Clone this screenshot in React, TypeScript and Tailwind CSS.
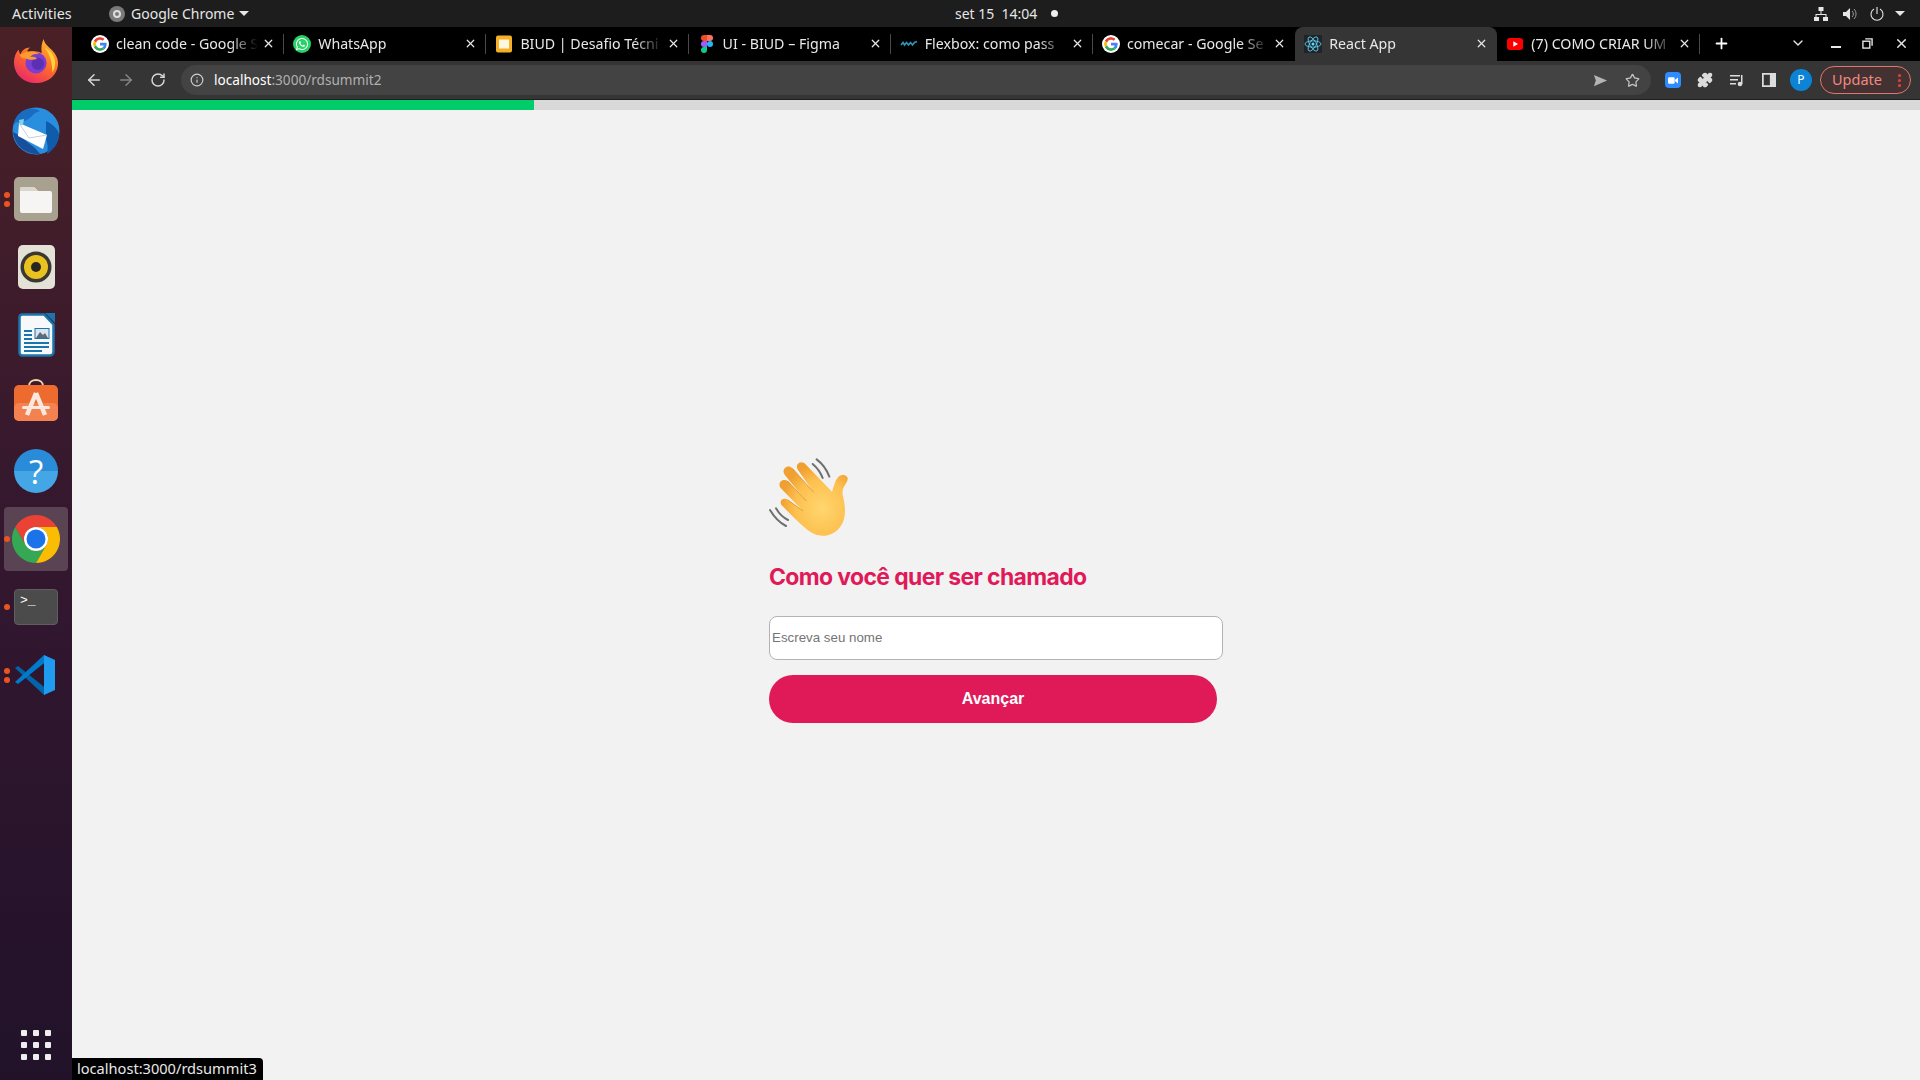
import React from 'react';
import { X, Plus, ChevronDown, ArrowLeft, ArrowRight, RotateCw, Info, Star, Puzzle } from 'lucide-react';
import { FaWhatsapp } from 'react-icons/fa';

const uiFont = 'font-["Noto_Sans",sans-serif]';

const GoogleIcon = () => (
  <svg viewBox="0 0 48 48" className="w-[18px] h-[18px] rounded-full bg-white p-[2px]">
    <path fill="#EA4335" d="M24 9.5c3.5 0 6.7 1.2 9.2 3.600l6.900-6.900C35.900 2.400 30.400 0 24 0 14.600 0 6.500 5.400 2.600 13.200l8 6.200C12.500 13.600 17.800 9.500 24 9.500z" />
    <path fill="#4285F4" d="M46.900 24.500c0-1.600-.1-3.100-.4-4.500H24v9h12.900c-.6 3-2.200 5.500-4.700 7.200l7.700 6c4.500-4.200 7-10.300 7-17.700z" />
    <path fill="#FBBC05" d="M10.600 28.600c-.5-1.400-.8-3-.8-4.600s.3-3.200.8-4.600l-8-6.200C.9 16.500 0 20.100 0 24s.9 7.500 2.600 10.800l8-6.200z" />
    <path fill="#34A853" d="M24 48c6.500 0 11.900-2.100 15.900-5.800l-7.700-6c-2.200 1.500-4.900 2.300-8.200 2.300-6.200 0-11.500-4.100-13.400-9.900l-8 6.200C6.500 42.600 14.600 48 24 48z" />
  </svg>
);

const WhatsAppIcon = () => (
  <span className="flex items-center justify-center w-[18px] h-[18px] rounded-full bg-[#25d366] text-white">
    <FaWhatsapp size={14} />
  </span>
);

const SlidesIcon = () => (
  <svg viewBox="0 0 18 18" className="w-[18px] h-[18px]">
    <rect x="1" y="0.500" width="16" height="17" rx="2" fill="#f6b026" />
    <rect x="4" y="4.500" width="10" height="9" fill="#fff6df" />
  </svg>
);

const FigmaIcon = () => (
  <svg viewBox="0 0 12 18" className="w-[12px] h-[18px]">
    <path fill="#f24e1e" d="M3 0h3v6H3a3 3 0 0 1 0-6z" />
    <path fill="#ff7262" d="M6 0h3a3 3 0 0 1 0 6H6z" />
    <path fill="#a259ff" d="M3 6h3v6H3a3 3 0 0 1 0-6z" />
    <circle cx="9" cy="9" r="3" fill="#1abcfe" />
    <path fill="#0acf83" d="M3 12h3v3a3 3 0 1 1-3-3z" />
  </svg>
);

const DpwIcon = () => (
  <svg viewBox="0 0 18 18" className="w-[18px] h-[18px]">
    <path d="M1 10l2-2.500 1.500 2.500 2-2.500 2 2.500 2-2.500 2 2.500 2-2.500 2.500-1" fill="none" stroke="#2a97b5" strokeWidth="1.600" />
  </svg>
);

const ReactIcon = () => (
  <svg viewBox="0 0 18 18" className="w-[18px] h-[18px] bg-[#20232a]">
    <g fill="none" stroke="#61dafb" strokeWidth="0.800">
      <ellipse cx="9" cy="9" rx="8" ry="3.200" />
      <ellipse cx="9" cy="9" rx="8" ry="3.200" transform="rotate(60 9 9)" />
      <ellipse cx="9" cy="9" rx="8" ry="3.200" transform="rotate(120 9 9)" />
    </g>
    <circle cx="9" cy="9" r="1.500" fill="#61dafb" />
  </svg>
);

const YoutubeIcon = () => (
  <svg viewBox="0 0 18 18" className="w-[18px] h-[18px]">
    <rect x="1" y="3" width="16" height="12" rx="3" fill="#ff0000" />
    <path d="M7.300 6.300L12 9l-4.700 2.700z" fill="#fff" />
  </svg>
);

const tabs = [
  { title: 'clean code - Google S', icon: <GoogleIcon /> },
  { title: 'WhatsApp', icon: <WhatsAppIcon /> },
  { title: 'BIUD | Desafio Técni', icon: <SlidesIcon /> },
  { title: 'UI - BIUD – Figma', icon: <FigmaIcon /> },
  { title: 'Flexbox: como pass', icon: <DpwIcon /> },
  { title: 'comecar - Google Se', icon: <GoogleIcon /> },
  { title: 'React App', icon: <ReactIcon />, active: true },
  { title: '(7) COMO CRIAR UM', icon: <YoutubeIcon /> },
];

const FirefoxIcon = () => (
  <svg viewBox="0 0 48 48" className="w-[46px] h-[46px] -mt-[4px]">
    <defs>
      <linearGradient id="ff" x1="0.800" y1="0" x2="0.200" y2="1">
        <stop offset="0" stopColor="#ffbd2e" />
        <stop offset="0.500" stopColor="#ff6a2a" />
        <stop offset="1" stopColor="#e8246e" />
      </linearGradient>
    </defs>
    <path fill="url(#ff)" d="M32 1c1 5 4 7 8 11 5 5 7 10 7 14 0 12-10 21-23 21S1 38 1 25c0-5 2-10 5-13 0 2 1 4 2 5 1-4 5-7 10-7-4 3-3 4-2 5 5-2 11-1 14 1-1-6 0-11 2-15z" />
    <circle cx="24" cy="26" r="11" fill="#7b3ed0" />
    <circle cx="26" cy="27" r="6.500" fill="#5b30b5" />
    <path fill="#ff9a2e" d="M7 18c6-5 16-6 20-1-5-1-8 1-9 3 3-1 6 0 7 2-5 1-8 1-12-1-2 1-4 0-6-3z" />
    <path fill="#ffd23e" d="M33 10c6 3 11 9 11 16 0 4-1 7-3 10 0-8-1-17-8-26z" />
  </svg>
);

const ThunderbirdIcon = () => (
  <svg viewBox="0 0 48 48" className="w-[48px] h-[48px]">
    <circle cx="24" cy="24" r="23.500" fill="#2a8ede" />
    <path fill="#0f5cab" d="M34 14c8 4 14 10 13 16-1 7-6 13-12 17 1-5 1-10-1-15z" />
    <path fill="#1a6cc0" d="M8 6c5-5 14-6 20-2-4 1-7 3-9 6-3 3-8 5-13 5-2 0-3 1-5 4 1-5 3-10 7-13z" />
    <path fill="#2f7fd0" d="M1 22c3 14 13 25 27 25C14 49 0 38 1 22z" />
    <path fill="#164f9c" d="M1 25c4 2 9 5 13 9 5 4 10 7 14 13-10 1-25-5-27-22z" />
    <path fill="#ffffff" d="M7 16l28 12-4 14-25-13z" />
    <path fill="none" stroke="#b9c3cf" strokeWidth="0.800" d="M7 16l10 15 18-3" />
    <path fill="#7fd4e8" d="M7 13l5-1-1 6-3 0z" />
  </svg>
);

const FilesIcon = () => (
  <div className="w-[44px] h-[44px] rounded-[5px] bg-[#a8a18f] flex items-center justify-center">
    <svg viewBox="0 0 44 44" className="w-[44px] h-[44px]">
      <path fill="#f6f5f3" d="M6 12a2 2 0 0 1 2-2h12l4 4h12a2 2 0 0 1 2 2v18a2 2 0 0 1-2 2H8a2 2 0 0 1-2-2z" />
      <path fill="#d9d6cc" d="M6 12a2 2 0 0 1 2-2h12l4 4H6z" />
    </svg>
  </div>
);

const RhythmboxIcon = () => (
  <div className="w-[37px] h-[44px] rounded-[5px] bg-[#e4e1d6] flex items-center justify-center">
    <svg viewBox="0 0 32 32" className="w-[32px] h-[32px]">
      <circle cx="16" cy="16" r="15.500" fill="#3b3733" />
      <circle cx="16" cy="16" r="12" fill="#eac21f" />
      <circle cx="16" cy="16" r="5" fill="#2a2723" />
    </svg>
  </div>
);

const WriterIcon = () => (
  <svg viewBox="0 0 37 44" className="w-[37px] h-[44px]">
    <path fill="#f7f8f9" stroke="#1b75ad" strokeWidth="2.500" d="M4 1.500h22l9.500 10V39a3.500 3.500 0 0 1-3.500 3.500H4A3 3 0 0 1 1.500 39V4.500A3 3 0 0 1 4 1.500z" />
    <path fill="#1b75ad" d="M27 0h10v10z" />
    <g fill="#1b75ad">
      <rect x="6" y="17" width="8" height="2" />
      <rect x="6" y="21" width="8" height="2" />
      <rect x="6" y="25" width="8" height="2" />
      <rect x="6" y="29" width="25" height="2" />
      <rect x="6" y="33" width="25" height="2" />
      <rect x="6" y="37" width="18" height="2" />
    </g>
    <rect x="17" y="15.500" width="14" height="10" fill="#d9e5ee" stroke="#1b75ad" />
    <path d="M18 25l4-6 3 3 2-2 3 5z" fill="#5d6a78" />
  </svg>
);

const SoftwareIcon = () => (
  <svg viewBox="0 0 44 36" className="w-[44px] h-[36px] overflow-visible">
    <path d="M15 1c0-8 14-8 14 0" fill="none" stroke="#f3d7a7" strokeWidth="2" />
    <rect width="44" height="36" rx="5" fill="#ee6b2f" />
    <rect y="18" width="44" height="18" rx="5" fill="#f48150" />
    <path d="M22 8L13 30M22 8l9 22" stroke="#fbe9df" strokeWidth="4.500" fill="none" />
    <rect x="8" y="21" width="28" height="3" rx="1.500" fill="#fbe9df" />
  </svg>
);

const HelpIcon = () => (
  <div className="relative w-[44px] h-[44px] rounded-full bg-gradient-to-b from-[#2a8bd8] from-50% to-[#45a6e6] to-50% flex items-center justify-center text-white text-[33px] leading-none font-normal font-['Open_Sans',sans-serif]">
    ?
  </div>
);

const ChromeIcon = ({ className = 'w-[48px] h-[48px]' }: { className?: string }) => (
  <svg viewBox="0 0 48 48" className={className}>
    <path fill="#ea4335" d="M6.680 14A20 20 0 0 1 41.320 14H24a10 10 0 0 0-8.660 15z" transform="translate(24 24) scale(1.200) translate(-24 -24)" />
    <path fill="#34a853" d="M6.680 14A20 20 0 0 0 24 44L32.660 29A10 10 0 0 1 15.340 29z" transform="translate(24 24) scale(1.200) translate(-24 -24)" />
    <path fill="#fbbc04" d="M41.320 14A20 20 0 0 1 24 44L32.660 29A10 10 0 0 0 24 14z" transform="translate(24 24) scale(1.200) translate(-24 -24)" />
    <circle cx="24" cy="24" r="12" fill="#fff" />
    <circle cx="24" cy="24" r="9.500" fill="#1a73e8" />
  </svg>
);

const TerminalIcon = () => (
  <div className="w-[44px] h-[36px] rounded-[4px] bg-[#4b4b4b] border border-[#5f5f5f] text-white text-[13px] leading-none pl-[5px] pt-[4px] font-['Liberation_Mono',monospace]">
    &gt;_
  </div>
);

const VSCodeIcon = () => (
  <svg viewBox="0 0 44 44" className="w-[44px] h-[44px]">
    <path fill="#0065a9" d="M1 15l3-2 30 24-4 5z" />
    <path fill="#007acc" d="M1 29l3 2L34 7l-4-5z" />
    <path fill="#1f9cf0" d="M30 2l11 5v30l-11 5z" />
  </svg>
);

const dock = [
  { icon: <FirefoxIcon /> },
  { icon: <ThunderbirdIcon /> },
  { icon: <FilesIcon />, dots: 2 },
  { icon: <RhythmboxIcon /> },
  { icon: <WriterIcon /> },
  { icon: <SoftwareIcon /> },
  { icon: <HelpIcon /> },
  { icon: <ChromeIcon />, dots: 1, active: true },
  { icon: <TerminalIcon />, dots: 1 },
  { icon: <VSCodeIcon />, dots: 2 },
];

const Dock = () => (
  <aside className="w-[72px] shrink-0 flex flex-col items-center pt-[2px] bg-gradient-to-b from-[#4a2026] via-[#33172f] to-[#21122a]">
    {dock.map((d, i) => (
      <div key={i} className="relative w-full h-[68px] flex items-center justify-center">
        {d.active && <div className="absolute left-[4px] right-[4px] top-[2px] bottom-[2px] rounded-[4px] bg-[#5a4453]" />}
        <div className="relative">{d.icon}</div>
        {d.dots && (
          <div className="absolute left-[4px] top-0 bottom-0 flex flex-col justify-center gap-[3px]">
            {Array.from({ length: d.dots }).map((_, k) => (
              <span key={k} className="block w-[6px] h-[6px] rounded-full bg-[#e95420]" />
            ))}
          </div>
        )}
      </div>
    ))}
    <div className="mt-auto mb-[20px] grid grid-cols-3 gap-x-[6px] gap-y-[6px]">
      {Array.from({ length: 9 }).map((_, i) => (
        <span key={i} className="block w-[6px] h-[6px] rounded-[1px] bg-[#eeeeee]" />
      ))}
    </div>
  </aside>
);

const TopBar = () => (
  <div className={`relative h-[27px] bg-[#1d1d1d] text-[#e6e6e6] text-[14px] flex items-center ${uiFont}`}>
    <span className="ml-[12px] w-[97px] text-[14.300px]">Activities</span>
    <span className="w-[16px] h-[16px] rounded-full bg-[#7a7a7a] flex items-center justify-center">
      <span className="w-[8px] h-[8px] rounded-full border-2 border-[#dddddd]" />
    </span>
    <span className="ml-[6px]">Google Chrome</span>
    <span className="ml-[5px] border-x-[5px] border-x-transparent border-t-[5px] border-t-[#e6e6e6]" />
    <div className="flex-1" />
    <svg viewBox="0 0 16 16" className="w-[16px] h-[16px] mr-[13px]" fill="#e6e6e6">
      <rect x="5.500" y="1" width="5" height="4" />
      <rect x="1" y="11" width="5" height="4" />
      <rect x="10" y="11" width="5" height="4" />
      <path d="M7.500 5h1v3h5v3h-1V9H3.500v2h-1V8h5z" />
    </svg>
    <svg viewBox="0 0 16 16" className="w-[16px] h-[16px] mr-[11px]" fill="#e6e6e6">
      <path d="M1 6h3l4-4v12l-4-4H1z" />
      <path d="M10 5a4 4 0 0 1 0 6M12 3a7 7 0 0 1 0 10" stroke="#9a9a9a" strokeWidth="1" fill="none" />
    </svg>
    <svg viewBox="0 0 16 16" className="w-[16px] h-[16px] mr-[10px]" fill="none" stroke="#e6e6e6" strokeWidth="1.100">
      <path d="M5 3a6 6 0 1 0 6 0M8 1v7" />
    </svg>
    <span className="mr-[15px] border-x-[5px] border-x-transparent border-t-[5px] border-t-[#e6e6e6]" />
    <div className="absolute left-[955px] top-0 h-full flex items-center">
      <span>set 15&nbsp;&nbsp;14:04</span>
      <span className="ml-[14px] w-[7px] h-[7px] rounded-full bg-[#eeeeee]" />
    </div>
  </div>
);

const TabStrip = () => (
  <div className={`h-[34px] bg-black flex items-stretch pl-[10px] text-[14.200px] ${uiFont}`}>
    {tabs.map((t, i) => {
      const next = tabs[i + 1];
      const noSep = t.active || next?.active;
      return (
        <div
          key={i}
          className={`relative w-[202.200px] shrink-0 flex items-center pl-[9px] pr-[9px] pb-[1px] ${t.active ? 'bg-[#353535] rounded-t-[8px] text-[#e8e8e8]' : 'text-[#e8e8e8]'}`}
        >
          <span className="w-[18px] h-[18px] flex items-center justify-center shrink-0">{t.icon}</span>
          <span className="ml-[7px] flex-1 overflow-hidden whitespace-nowrap [mask-image:linear-gradient(to_right,black_80%,transparent)]">
            {t.title}
          </span>
          <X size={13} strokeWidth={2.200} className="ml-[4px] shrink-0 text-[#e8e8e8]" />
          {!noSep && <span className="absolute right-0 top-[7px] bottom-[7px] w-px bg-[#4a4a4a]" />}
        </div>
      );
    })}
    <div className="w-[44px] pb-[2px] flex items-center justify-center text-white">
      <Plus size={17} strokeWidth={2.500} />
    </div>
    <div className="flex-1" />
    <div className="flex items-center pb-[2px] text-[#e8e8e8]">
      <ChevronDown size={16} className="mr-[25px]" />
      <span className="w-[10px] h-[2px] bg-[#e8e8e8] mt-[8px] mr-[21px]" />
      <svg viewBox="0 0 12 12" className="w-[11px] h-[11px] mr-[21px]" fill="none" stroke="#e8e8e8" strokeWidth="1.500">
        <rect x="1" y="3.500" width="7.500" height="7.500" />
        <path d="M3.500 1h7.500v7.500" />
      </svg>
      <X size={15} strokeWidth={2.200} className="mr-[11px]" />
    </div>
  </div>
);

const Toolbar = () => (
  <div className={`h-[39px] bg-[#353535] border-b border-[#1f1f1f] flex items-center ${uiFont}`}>
    <div className="w-[109px] flex items-center text-[#d8d8d8] pl-[13px] shrink-0">
      <ArrowLeft size={18} strokeWidth={2} />
      <ArrowRight size={18} strokeWidth={2} className="ml-[14px] text-[#858585]" />
      <RotateCw size={16} strokeWidth={2.200} className="ml-[15px]" />
    </div>
    <div className="w-[1470px] h-[30px] rounded-full bg-[#434343] flex items-center pl-[9px] pr-[11px] shrink-0 text-[13.600px]">
      <Info size={14} className="text-[#cfcfcf]" />
      <span className="ml-[10px] text-white">localhost</span>
      <span className="text-[#b0b0b0]">:3000/rdsummit2</span>
      <div className="flex-1" />
      <svg viewBox="0 0 16 16" className="w-[15px] h-[15px] mr-[17px]" fill="#b4b4b4">
        <path d="M1 2l14 6-14 6 2-6z" />
      </svg>
      <Star size={15} className="text-[#c4c4c4]" />
    </div>
    <div className="ml-[14px] w-[16px] h-[16px] rounded-[4px] bg-[#2d8cff] flex items-center justify-center">
      <svg viewBox="0 0 12 8" className="w-[10px] h-[7px]" fill="#fff">
        <rect width="8" height="8" rx="1.500" />
        <path d="M8.500 3l3.500-2.500v7L8.500 5z" />
      </svg>
    </div>
    <Puzzle size={16} className="ml-[16px] text-[#dcdcdc] fill-[#dcdcdc]" />
    <svg viewBox="0 0 16 16" className="w-[16px] h-[16px] ml-[16px]" fill="#dcdcdc">
      <rect x="1" y="3" width="10" height="1.500" />
      <rect x="1" y="7" width="8" height="1.500" />
      <rect x="1" y="11" width="6" height="1.500" />
      <rect x="12" y="3" width="1.500" height="9" />
      <circle cx="11" cy="12" r="2.300" />
    </svg>
    <svg viewBox="0 0 16 16" className="w-[14px] h-[14px] ml-[17px]" fill="#dcdcdc">
      <path d="M0 0h16v16H0zM2 2v12h7V2z" fillRule="evenodd" />
    </svg>
    <div className="ml-[14px] w-[22px] h-[22px] rounded-full bg-[#0b84d8] text-white text-[12px] flex items-center justify-center">P</div>
    <div className="ml-[8px] w-[91px] h-[28px] rounded-full border border-[#e2766e] bg-[#433231] text-[#ee8a82] text-[14.500px] flex items-center pl-[11px]">
      Update
      <span className="ml-[16px] flex flex-col gap-[2px]">
        <span className="block w-[3px] h-[3px] rounded-full bg-[#e5443a]" />
        <span className="block w-[3px] h-[3px] rounded-full bg-[#e5443a]" />
        <span className="block w-[3px] h-[3px] rounded-full bg-[#e5443a]" />
      </span>
    </div>
  </div>
);

const WavingHand = () => (
  <svg viewBox="57 54 240 240" className="w-[80px] h-[80px] block">
    <defs>
      <radialGradient id="hand" cx="0.620" cy="0.620" r="0.600">
        <stop offset="0" stopColor="#ffd670" />
        <stop offset="0.650" stopColor="#fdc04e" />
        <stop offset="1" stopColor="#f0a030" />
      </radialGradient>
    </defs>
    <g fill="none" stroke="#6e6e6e" strokeWidth="6" strokeLinecap="round">
      <path d="M200 58c16 12 30 30 38 52" />
      <path d="M188 72c12 10 24 26 30 42" />
      <path d="M60 210c12 20 28 38 48 48" />
      <path d="M78 205c8 14 22 28 36 35" />
    </g>
    <path
      fill="url(#hand)"
      d="M95 196C85 184 100 170 114 180L158 212L92 144C80 128 100 112 114 124L168 182L104 104C92 88 114 70 128 86L190 156L144 90C132 72 154 58 168 74L246 155C252 140 255 118 268 108C280 100 298 108 292 122C286 135 275 145 278 165C284 190 290 220 278 248C262 282 225 295 195 283C165 270 125 225 95 196Z"
    />
    <g fill="none" stroke="#dd8f28" strokeWidth="2.500" strokeLinecap="round">
      <path d="M114 180L158 212" />
      <path d="M114 124L168 182" />
      <path d="M128 86L190 156" />
    </g>
  </svg>
);

const StatusBubble = () => (
  <div className={`absolute left-0 bottom-0 h-[22px] w-[191px] bg-black text-[#e8e8e8] text-[14.600px] leading-[21px] pl-[5px] rounded-tr-[4px] ${uiFont}`}>
    localhost:3000/rdsummit3
  </div>
);

export default function App() {
  return (
    <div className="w-[1920px] h-[1080px] overflow-hidden flex flex-col bg-[#f2f2f2]">
      <TopBar />
      <div className="flex-1 flex min-h-0">
        <Dock />
        <div className="flex-1 min-w-0 flex flex-col relative">
          <TabStrip />
          <Toolbar />
          <div className="h-[10px] bg-[#d9d9d9] shrink-0">
            <div className="h-full w-[462px] bg-[#00cc6a]" />
          </div>
          <main className="flex-1 flex flex-col items-center pt-[348px] bg-[#f2f2f2]">
            <div className="w-[454px] flex flex-col items-start">
              <WavingHand />
              <h1 className="mt-[24px] text-[22.900px] leading-[30px] font-bold tracking-[-0.6px] text-[#e01a59] font-['Inter',sans-serif]">
                Como você quer ser chamado
              </h1>
              <input
                className="mt-[24px] w-[454px] h-[44px] rounded-[8px] border border-[#b3b3b3] bg-white px-[2px] pb-[1px] text-[13.333px] font-['Liberation_Sans',sans-serif] placeholder:text-[#757575]"
                placeholder="Escreva seu nome"
              />
              <button className="mt-[15px] w-[448px] h-[48px] rounded-[24px] bg-[#e01a59] text-white text-[16px] font-bold font-['Liberation_Sans',sans-serif]">
                Avançar
              </button>
            </div>
          </main>
          <StatusBubble />
        </div>
      </div>
    </div>
  );
}
